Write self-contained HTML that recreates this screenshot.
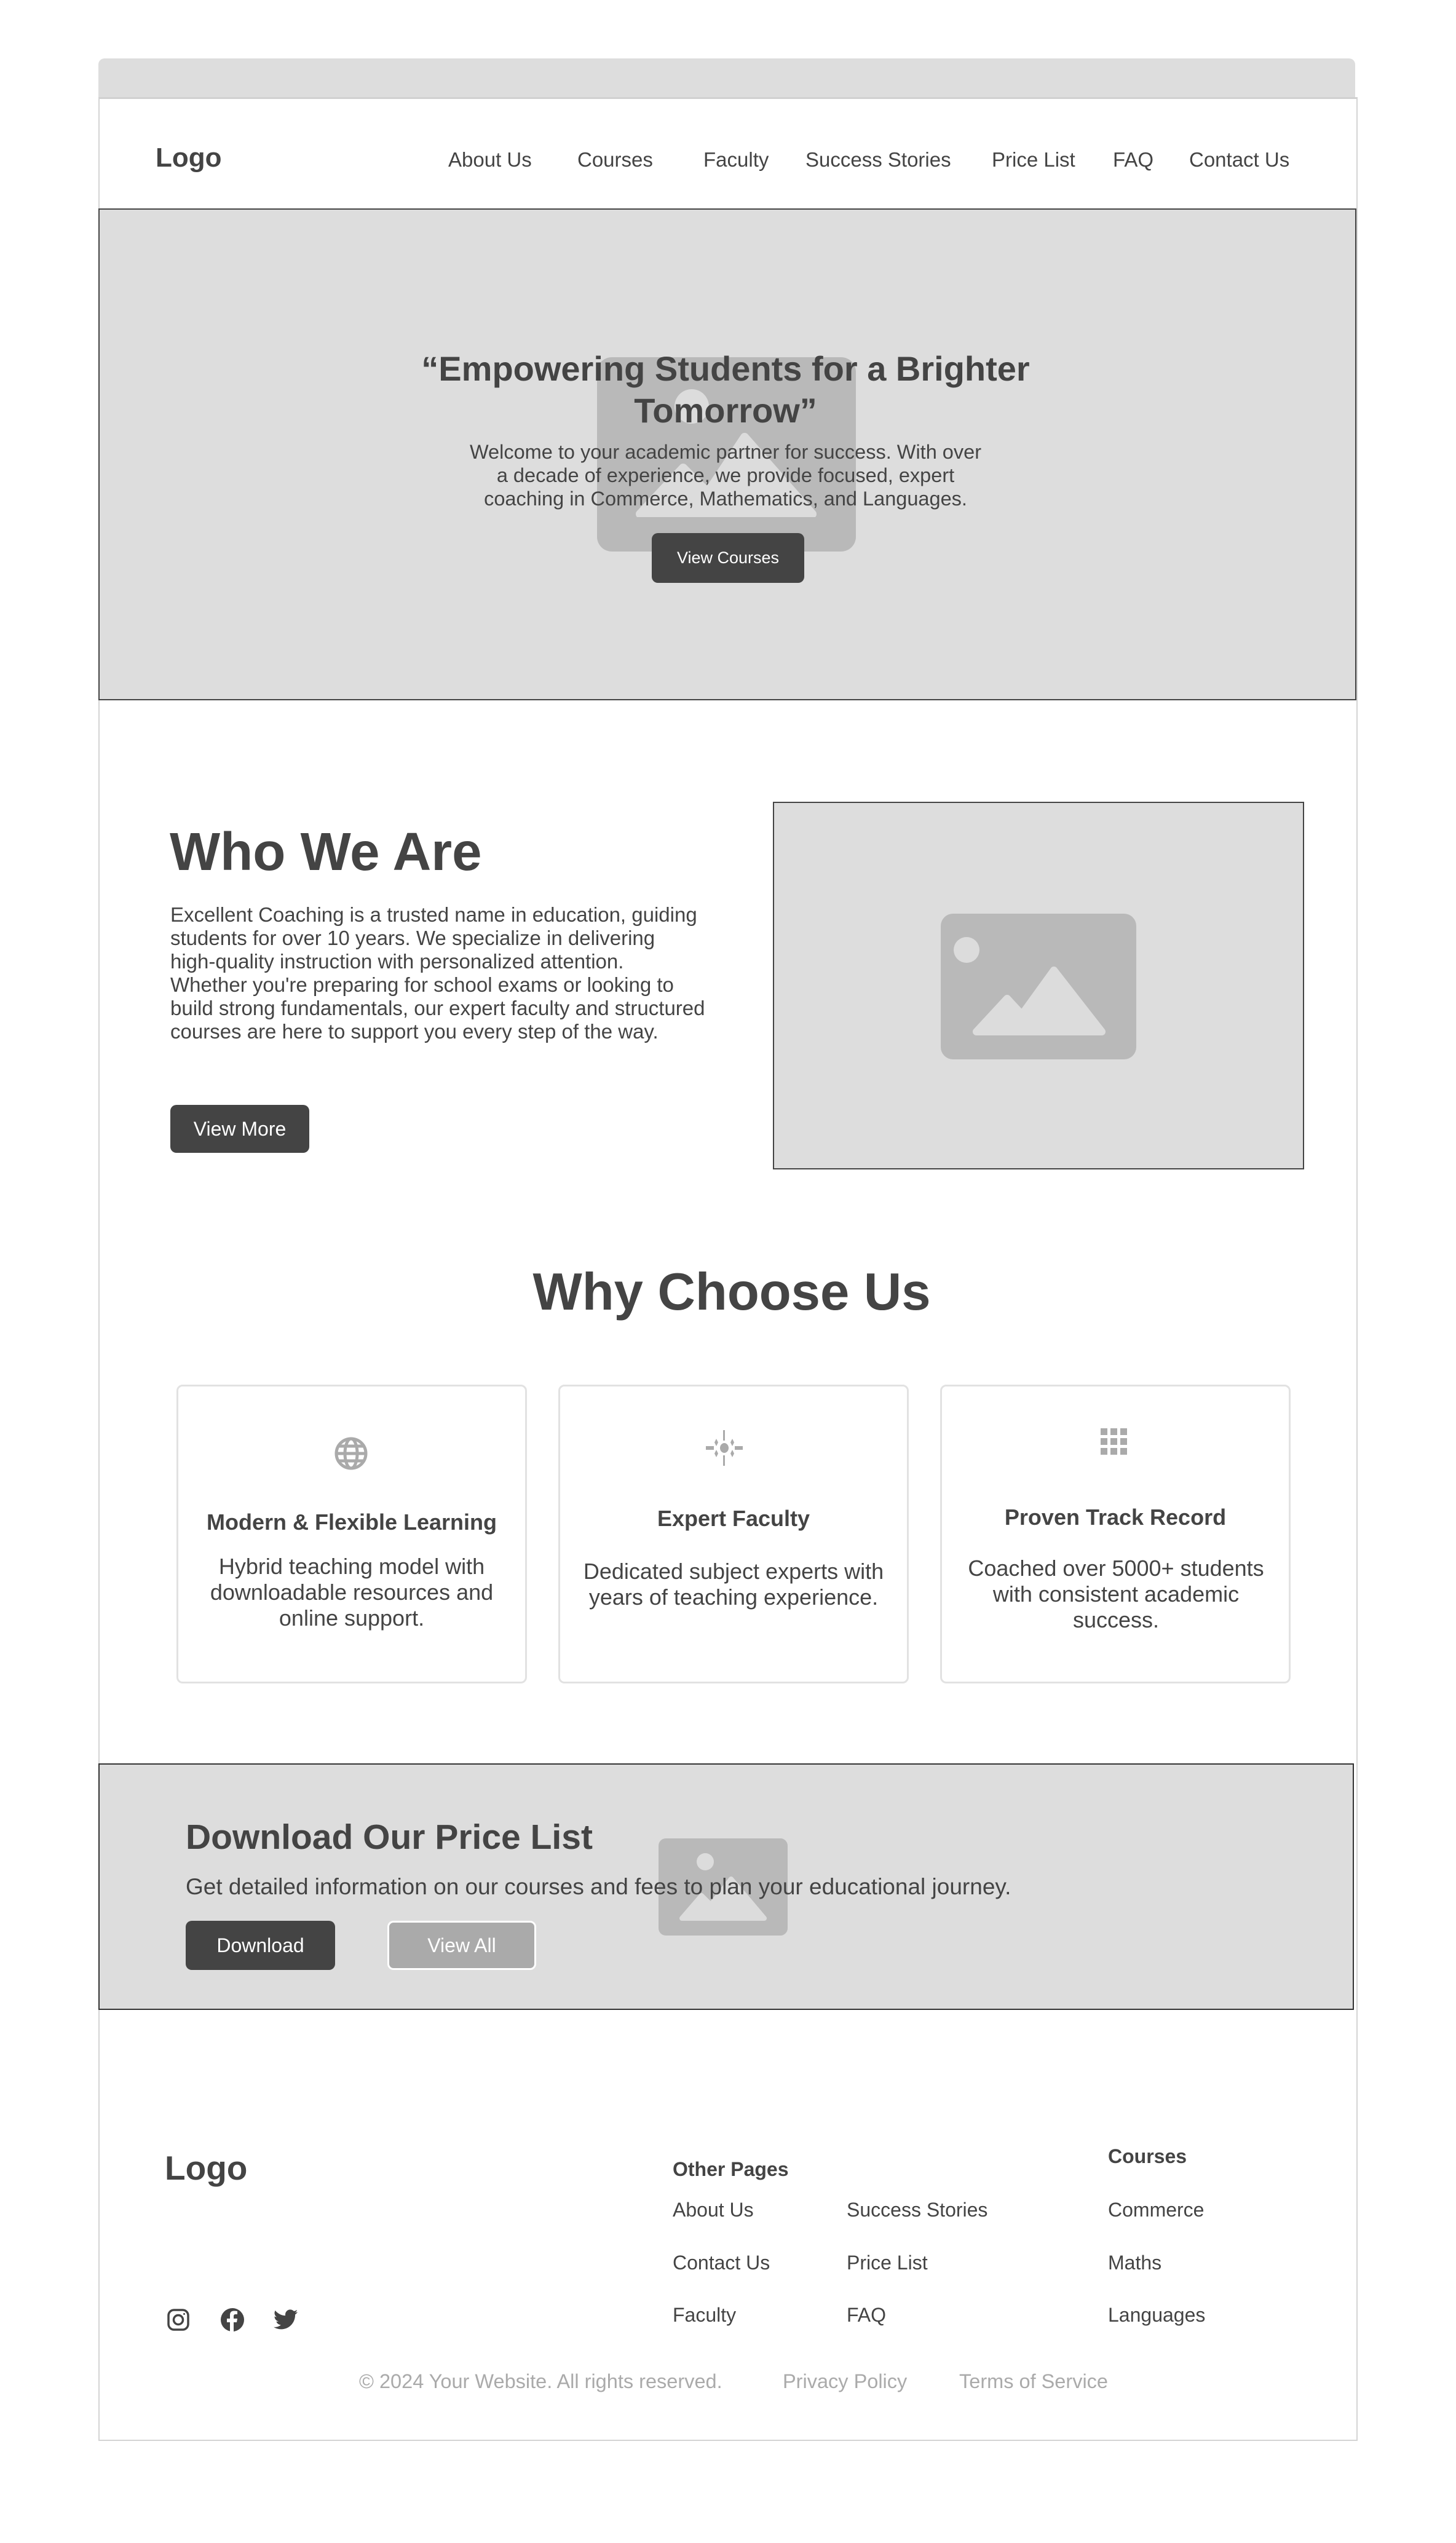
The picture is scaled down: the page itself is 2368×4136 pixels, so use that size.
<!DOCTYPE html>
<html><head><meta charset="utf-8">
<style>
*{margin:0;padding:0;box-sizing:border-box}
body{width:2368px;height:4136px;background:#fff;font-family:"Liberation Sans",Arial,sans-serif;color:#444;position:relative;overflow:hidden}
.a{position:absolute;white-space:nowrap}
.c{text-align:center}
.btn{position:absolute;background:#444;color:#fff;border-radius:10px;display:flex;align-items:center;justify-content:center}
.card{position:absolute;top:2252px;width:570px;height:486px;border:3px solid #e2e2e2;border-radius:10px;background:#fff}
.nav{font-size:33px;color:#444;top:240px;line-height:40px}
.fl{font-size:32px;color:#444;line-height:40px}
</style></head><body>
<div class="a" style="left:160px;top:95px;width:2044px;height:63px;background:#dddddd;border-radius:10px 10px 0 0"></div>
<div class="a" style="left:160px;top:158px;width:2048px;height:3812px;border:2px solid #d4d4d4;border-top:3px solid #d0d0d0"></div>

<div class="a" style="left:253px;top:232px;font-size:44px;font-weight:bold;line-height:50px;color:#444">Logo</div>
<div class="a nav" style="left:729px">About Us</div>
<div class="a nav" style="left:939px">Courses</div>
<div class="a nav" style="left:1144px">Faculty</div>
<div class="a nav" style="left:1310px">Success Stories</div>
<div class="a nav" style="left:1613px">Price List</div>
<div class="a nav" style="left:1810px">FAQ</div>
<div class="a nav" style="left:1934px">Contact Us</div>

<!-- hero -->
<div class="a" style="left:160px;top:339px;width:2046px;height:800px;background:#dddddd;border:2px solid #444"></div>
<div class="a" style="left:971px;top:581px;width:421px;height:316px;background:#b9b9b9;border-radius:24px;overflow:hidden">
 <div style="position:absolute;left:126px;top:52px;width:56px;height:56px;border-radius:50%;background:#dcdcdc"></div>
 <svg style="position:absolute;left:60px;top:110px" width="300" height="150" viewBox="0 0 300 150"><path d="M10 145 L80 70 L120 110 L180 20 L290 145 Z" fill="#dcdcdc" stroke="#dcdcdc" stroke-width="14" stroke-linejoin="round"/></svg>
</div>
<div class="a c" style="left:620px;top:566px;width:1120px;font-size:56px;font-weight:bold;line-height:68px;white-space:normal">“Empowering Students for a Brighter Tomorrow”</div>
<div class="a c" style="left:755px;top:716px;width:850px;font-size:32.5px;line-height:38px;white-space:normal">Welcome to your academic partner for success. With over a decade of experience, we provide focused, expert coaching in Commerce, Mathematics, and Languages.</div>
<div class="btn" style="left:1060px;top:867px;width:248px;height:81px;font-size:27px">View Courses</div>

<!-- who we are -->
<div class="a" style="left:276px;top:1336px;font-size:87px;font-weight:bold;line-height:100px">Who We Are</div>
<div class="a" style="left:277px;top:1469px;width:870px;font-size:33px;line-height:38px;white-space:normal">Excellent Coaching is a trusted name in education, guiding students for over 10 years. We specialize in delivering high-quality instruction with personalized attention. Whether you're preparing for school exams or looking to build strong fundamentals, our expert faculty and structured courses are here to support you every step of the way.</div>
<div class="btn" style="left:277px;top:1797px;width:226px;height:78px;font-size:32px">View More</div>
<div class="a" style="left:1257px;top:1304px;width:864px;height:598px;background:#dddddd;border:2px solid #444"></div>
<div class="a" style="left:1530px;top:1486px;width:318px;height:237px;background:#b9b9b9;border-radius:20px;overflow:hidden">
 <div style="position:absolute;left:21px;top:38px;width:42px;height:42px;border-radius:50%;background:#dcdcdc"></div>
 <svg style="position:absolute;left:50px;top:80px" width="220" height="120" viewBox="0 0 220 120"><path d="M8 112 L58 58 L82 84 L134 12 L212 112 Z" fill="#dcdcdc" stroke="#dcdcdc" stroke-width="12" stroke-linejoin="round"/></svg>
</div>

<!-- why -->
<div class="a c" style="left:0;width:2380px;top:2052px;font-size:85px;font-weight:bold;line-height:100px">Why Choose Us</div>
<div class="card" style="left:287px"></div>
<div class="card" style="left:908px"></div>
<div class="card" style="left:1529px"></div>
<svg class="a" style="left:543px;top:2336px" width="56" height="56" viewBox="0 0 56 56" fill="none" stroke="#aaa" stroke-width="5"><circle cx="28" cy="28" r="24"/><ellipse cx="28" cy="28" rx="10" ry="24"/><line x1="4" y1="28" x2="52" y2="28"/><line x1="8" y1="16" x2="48" y2="16"/><line x1="8" y1="40" x2="48" y2="40"/></svg>
<svg class="a" style="left:1148px;top:2325px" width="60" height="60" viewBox="0 0 60 60" fill="#aaa"><ellipse cx="30" cy="30" rx="7" ry="8"/><rect x="28" y="1" width="3" height="17"/><rect x="28" y="42" width="3" height="17"/><rect x="0" y="27" width="13" height="6"/><rect x="47" y="27" width="13" height="6"/><path d="M17 15 l3 6 l-3 6 l-3 -6z M43 15 l3 6 l-3 6 l-3 -6z M17 33 l3 6 l-3 6 l-3 -6z M43 33 l3 6 l-3 6 l-3 -6z"/></svg>
<svg class="a" style="left:1790px;top:2323px" width="44" height="44" viewBox="0 0 44 44" fill="#aaa"><rect x="0" y="0" width="11" height="11"/><rect x="16" y="0" width="11" height="11"/><rect x="32" y="0" width="11" height="11"/><rect x="0" y="16" width="11" height="11"/><rect x="16" y="16" width="11" height="11"/><rect x="32" y="16" width="11" height="11"/><rect x="0" y="32" width="11" height="11"/><rect x="16" y="32" width="11" height="11"/><rect x="32" y="32" width="11" height="11"/></svg>

<div class="a c" style="left:287px;width:570px;top:2456px;font-size:36px;font-weight:bold;line-height:40px">Modern &amp; Flexible Learning</div>
<div class="a c" style="left:315px;width:514px;top:2527px;font-size:36px;line-height:42px;white-space:normal">Hybrid teaching model with downloadable resources and online support.</div>
<div class="a c" style="left:908px;width:570px;top:2450px;font-size:36px;font-weight:bold;line-height:40px">Expert Faculty</div>
<div class="a c" style="left:915px;width:556px;top:2535px;font-size:36px;line-height:42px;white-space:normal">Dedicated subject experts with years of teaching experience.</div>
<div class="a c" style="left:1529px;width:570px;top:2448px;font-size:36px;font-weight:bold;line-height:40px">Proven Track Record</div>
<div class="a c" style="left:1555px;width:520px;top:2530px;font-size:36px;line-height:42px;white-space:normal">Coached over 5000+ students with consistent academic success.</div>

<!-- price list -->
<div class="a" style="left:160px;top:2868px;width:2042px;height:401px;background:#dddddd;border:2px solid #333"></div>
<div class="a" style="left:1071px;top:2990px;width:210px;height:158px;background:#b9b9b9;border-radius:12px;overflow:hidden">
 <div style="position:absolute;left:62px;top:24px;width:28px;height:28px;border-radius:50%;background:#dcdcdc"></div>
 <svg style="position:absolute;left:30px;top:58px" width="150" height="80" viewBox="0 0 150 80"><path d="M8 72 L40 35 L55 50 L88 8 L142 72 Z" fill="#dcdcdc" stroke="#dcdcdc" stroke-width="8" stroke-linejoin="round"/></svg>
</div>
<div class="a" style="left:302px;top:2955px;font-size:57px;font-weight:bold;line-height:66px">Download Our Price List</div>
<div class="a" style="left:302px;top:3048px;font-size:37px;line-height:42px">Get detailed information on our courses and fees to plan your educational journey.</div>
<div class="btn" style="left:302px;top:3124px;width:243px;height:80px;font-size:32px">Download</div>
<div class="btn" style="left:630px;top:3124px;width:242px;height:80px;font-size:32px;background:#aaa;border:3px solid #fff">View All</div>

<!-- footer -->
<div class="a" style="left:268px;top:3494px;font-size:55px;font-weight:bold;line-height:64px">Logo</div>
<div class="a fl" style="left:1094px;top:3508px;font-weight:bold">Other Pages</div>
<div class="a fl" style="left:1802px;top:3487px;font-weight:bold">Courses</div>
<div class="a fl" style="left:1094px;top:3574px">About Us</div>
<div class="a fl" style="left:1377px;top:3574px">Success Stories</div>
<div class="a fl" style="left:1802px;top:3574px">Commerce</div>
<div class="a fl" style="left:1094px;top:3660px">Contact Us</div>
<div class="a fl" style="left:1377px;top:3660px">Price List</div>
<div class="a fl" style="left:1802px;top:3660px">Maths</div>
<div class="a fl" style="left:1094px;top:3745px">Faculty</div>
<div class="a fl" style="left:1377px;top:3745px">FAQ</div>
<div class="a fl" style="left:1802px;top:3745px">Languages</div>

<svg class="a" style="left:272px;top:3755px" width="36" height="36" viewBox="0 0 36 36" fill="none" stroke="#444" stroke-width="3.5"><rect x="2" y="2" width="32" height="32" rx="9"/><circle cx="18" cy="18" r="7.5"/><circle cx="27.5" cy="8.5" r="1.5" fill="#444" stroke="none"/></svg>
<svg class="a" style="left:358px;top:3753px" width="40" height="40" viewBox="0 0 40 40"><circle cx="20" cy="20" r="19" fill="#444"/><path d="M22 40 V24 H27 L28 18 H22 V14 C22 12 23 11 25 11 H28 V6 C26 5.6 24 5.5 22.5 5.5 C18 5.5 16 8 16 12.5 V18 H11 V24 H16 V40 Z" fill="#fff"/></svg>
<svg class="a" style="left:445px;top:3755px" width="40" height="36" viewBox="0 0 24 20"><path d="M23.6 2.3c-.9.4-1.8.6-2.8.8 1-.6 1.8-1.5 2.1-2.7-.9.6-2 1-3.1 1.2C18.9.6 17.6 0 16.2 0c-2.7 0-4.8 2.2-4.8 4.8 0 .4 0 .8.1 1.100C7.4 5.7 3.9 3.8 1.6.9c-.4.7-.7 1.6-.7 2.4 0 1.7.9 3.2 2.2 4-.8 0-1.5-.2-2.2-.6v.1c0 2.3 1.7 4.3 3.9 4.7-.4.1-.8.2-1.3.2-.3 0-.6 0-.9-.1.6 1.9 2.4 3.3 4.5 3.4-1.7 1.3-3.7 2.1-6 2.1-.4 0-.8 0-1.2-.1 2.1 1.4 4.7 2.2 7.4 2.2 8.9 0 13.7-7.4 13.7-13.7v-.6c1-.7 1.8-1.5 2.4-2.5z" fill="#444"/></svg>

<div class="a" style="left:584px;top:3853px;font-size:32.5px;line-height:40px;color:#aaa">© 2024 Your Website. All rights reserved.</div>
<div class="a" style="left:1273px;top:3853px;font-size:32.5px;line-height:40px;color:#aaa">Privacy Policy</div>
<div class="a" style="left:1560px;top:3853px;font-size:32.5px;line-height:40px;color:#aaa">Terms of Service</div>
</body></html>
